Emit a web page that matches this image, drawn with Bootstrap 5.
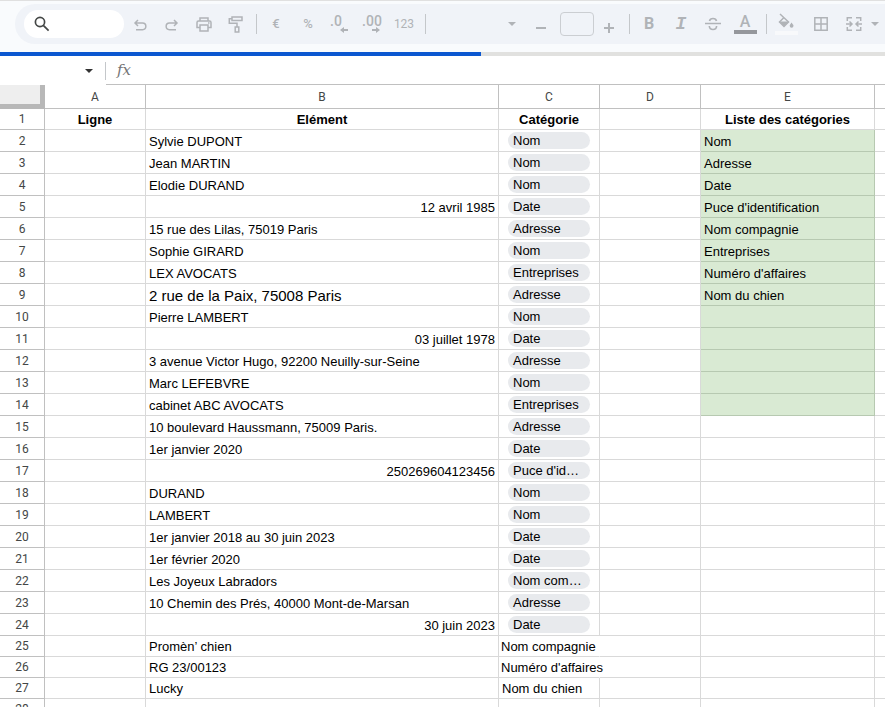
<!DOCTYPE html>
<html lang="fr">
<head>
<meta charset="utf-8">
<meta name="viewport" content="width=device-width, initial-scale=1">
<title>Feuille de calcul</title>
<link href="https://cdn.jsdelivr.net/npm/bootstrap@5.3.0/dist/css/bootstrap.min.css" rel="stylesheet">
<style>
body{font-family:"Liberation Sans",Arial,sans-serif;font-size:13px;color:#000;background:#fff}
.app-top{background:#f9fbfd;border-top:1px solid #e0e0e0;padding:3px 0 8px 15px}
.tools{background:#f0f3f8;height:40px;border-radius:20px 0 0 20px;padding-left:9px;color:#b0b3b7}
.tools>*{flex:none}
.search-pill{width:100px;height:28px;background:#fff;border-radius:14px;padding-left:10px}
.search-pill input{width:60px;background:transparent;outline:0}
.tool{width:32px;height:32px;padding:0;border:0;background:transparent;color:#b0b3b7;font:500 13px/16px Roboto,sans-serif;display:flex;align-items:center;justify-content:center}
.tool svg,.search-pill svg{display:block}
.tool-sm{width:24px}
.tool-xs{width:8px}
.tool-wide{width:92px;justify-content:flex-end;padding-right:5px}
.rule{width:1px;height:20px;background:#c4c7ca;margin:0 3px}
.rule-first{margin-left:4px}
.rule-gap{margin-left:5px}
.size-box{width:34px;height:24px;border:1px solid #cbced2;border-radius:4px;background:transparent;padding:0;margin:0 3px 0 7px}
.glyph-lg{font-size:16px;font-weight:700}
.glyph-sm{font-size:12px;font-weight:400}
.glyph-i{font:italic 700 18px/18px "Liberation Mono",monospace}
.digits{font-size:14px;line-height:12px}
.cells-group{gap:1px;margin-left:3px}
.load-bar{height:4px;border-radius:0;background:#e1e1df}
.load-bar .progress-bar{background:#0b57d0}
.formula{height:29px}
.name-box{width:105px;padding-right:12px}
.formula .rule{height:18px;margin:0}
.formula-field{border-bottom:1px solid #c0c0c0}
.fx{font:italic 400 15px/18px "DejaVu Serif",serif;color:#757575;padding-left:11px}
.formula input{outline:0}
.sheet-wrap{min-height:0}
.sheet{width:100%;table-layout:fixed;border-collapse:separate;border-spacing:0}
.sheet th,.sheet td{height:22px;padding:0 3px;border-right:1px solid #d9d9d9;border-bottom:1px solid #d9d9d9;line-height:18px;white-space:nowrap;vertical-align:bottom;overflow:hidden}
.sheet tr>:last-child{border-right:0}
.sheet .low>*{height:21px}
.sheet thead th{height:24px;border-color:#c0c0c0;line-height:22px;vertical-align:middle}
.sheet thead th,.sheet tbody th{font-family:Roboto,sans-serif;font-weight:400;font-size:12px;color:#444746;text-align:center}
.sheet tbody th{border-color:#c0c0c0;line-height:20px}
.sheet thead th.corner{background:#eee;border-right:5px solid #b8b8b8;border-bottom:5px solid #b8b8b8}
.c-num{width:45px}.c-std{width:101px}.c-el{width:353px}.c-list{width:174px}
.sheet td.spill{overflow:visible;border-right-color:transparent;padding-left:2px}
.sheet td.green{background:#d9ead3;border-color:#b7c9b1}
.sheet td.big{font-size:15px}
.sheet td.chip-cell{padding:2px 9px 0;vertical-align:top}
.chip{background:#e8eaed;border-radius:9px;height:17px;line-height:17px;padding:0 5px}
</style>
<script src="https://cdn.jsdelivr.net/npm/bootstrap@5.3.0/dist/js/bootstrap.bundle.min.js"></script>
</head>
<body class="vh-100 overflow-hidden d-flex flex-column">
<header class="app-top flex-shrink-0">
<div class="tools d-flex align-items-center overflow-hidden" role="toolbar" aria-label="Mise en forme">
<label class="search-pill d-flex align-items-center gap-2">
<svg width="16" height="16" viewBox="0 0 16 16" fill="none" stroke="#444746" stroke-width="1.7"><circle cx="6" cy="6" r="4.6"/><path d="M9.3 9.3 14.6 14.6"/></svg>
<input class="border-0 p-0" type="text" aria-label="Rechercher">
</label>
<button class="tool" aria-label="Annuler"><svg width="14" height="16" viewBox="0 0 14 16" fill="none" stroke="currentColor" stroke-width="1.5"><path d="M5 4 2 7l3 3M2 7h7.500a3.300 3.300 0 0 1 0 6.700H3"/></svg></button>
<button class="tool" aria-label="Rétablir"><svg width="14" height="16" viewBox="0 0 14 16" fill="none" stroke="currentColor" stroke-width="1.5"><path d="M9 4l3 3-3 3M12 7H4.500a3.300 3.300 0 0 0 0 6.700H11"/></svg></button>
<button class="tool" aria-label="Imprimer"><svg width="16" height="16" viewBox="0 0 16 16" fill="none" stroke="currentColor" stroke-width="1.500"><path d="M4 5V2h8v3M4 11.500H1V6.500Q1 5 2.500 5h11Q15 5 15 6.500v5h-3M4 9h8v6H4z"/><path d="M12 7h1.500"/></svg></button>
<button class="tool" aria-label="Copier la mise en forme"><svg width="16" height="18" viewBox="0 0 16 18" fill="none" stroke="currentColor" stroke-width="1.500"><path d="M4 2h10v3.500H4zM4 3.700H1.300V8.300H9V12M7.200 12h3.600v5H7.200z"/></svg></button>
<span class="rule rule-first"></span>
<button class="tool" aria-label="Format monétaire">€</button>
<button class="tool" aria-label="Format pourcentage">%</button>
<button class="tool flex-column" aria-label="Réduire les décimales"><span class="digits me-2">.0</span><svg width="8" height="6" viewBox="0 0 8 6" class="ms-2"><path d="M8 2H4V0L0 3l4 3V4h4z" fill="currentColor"/></svg></button>
<button class="tool flex-column" aria-label="Ajouter des décimales"><span class="digits">.00</span><svg width="8" height="6" viewBox="0 0 8 6" class="ms-2"><path d="M0 2h4V0l4 3-4 3V4H0z" fill="currentColor"/></svg></button>
<button class="tool glyph-sm" aria-label="Autres formats">123</button>
<span class="rule rule-gap"></span>
<button class="tool tool-wide" aria-label="Police"><svg width="8" height="4" viewBox="0 0 8 4"><path d="M0 0h8L4 4z" fill="currentColor"/></svg></button>
<button class="tool tool-sm ms-2" aria-label="Réduire la taille"><svg width="10" height="10" viewBox="0 0 10 10" class="mt-2"><path d="M0 4h10v2H0z" fill="currentColor"/></svg></button>
<input class="size-box" type="text" aria-label="Taille de police">
<button class="tool tool-sm" aria-label="Augmenter la taille"><svg width="10" height="10" viewBox="0 0 10 10" class="mt-2"><path d="M4 0h2v4h4v2H6v4H4V6H0V4h4z" fill="currentColor"/></svg></button>
<span class="rule ms-2"></span>
<button class="tool glyph-lg" aria-label="Gras">B</button>
<button class="tool glyph-i" aria-label="Italique">I</button>
<button class="tool" aria-label="Barré"><svg width="16" height="14" viewBox="0 0 16 14" fill="none" stroke="currentColor" stroke-width="1.600"><path d="M0 6.500h16M11.500 4Q11 1.500 8 1.500T4.500 4M4.300 9Q4.500 12.500 8 12.500T11.600 9"/></svg></button>
<button class="tool flex-column" aria-label="Couleur du texte"><span class="glyph-lg fw-medium">A</span><svg width="23" height="4" viewBox="0 0 23 4"><path d="M0 0h23v4H0z" fill="#95979c"/></svg></button>
<span class="rule rule-gap"></span>
<button class="tool" aria-label="Couleur de remplissage"><svg width="23" height="22" viewBox="0 0 23 22"><path d="M0 18h23v4H0z" fill="#f8f9fb"/><path d="M5 1l8.500 8L9 13.500 4.500 9 9 4.500" fill="none" stroke="currentColor" stroke-width="1.500"/><path d="M4.200 8.500h9.600L9 13.500z" fill="currentColor"/><path d="M16.500 9.500q2 2.500 2 3.300a1.900 1.900 0 0 1-3.800 0q0-.8 1.800-3.300z" fill="currentColor"/></svg></button>
<div class="cells-group d-flex align-items-center">
<button class="tool" aria-label="Bordures"><svg width="14" height="14" viewBox="0 0 14 14" fill="none" stroke="currentColor" stroke-width="1.500"><path d="M.8.800h12.400v12.400H.8zM7 1v12M1 7h12"/></svg></button>
<button class="tool" aria-label="Fusionner les cellules"><svg width="16" height="14" viewBox="0 0 16 14" fill="none" stroke="currentColor" stroke-width="1.500"><path d="M6 .8H1.300V4M10 .8h4.700V4M6 13.200H1.300V10M10 13.200h4.700V10M0 7h6M16 7h-6M3.500 4.500 6 7 3.500 9.500M12.500 4.500 10 7l2.500 2.500"/></svg></button>
<button class="tool tool-xs" aria-label="Type de fusion"><svg width="8" height="4" viewBox="0 0 8 4"><path d="M0 0h8L4 4z" fill="currentColor"/></svg></button>
</div>
</div>
</header>
<div class="progress load-bar flex-shrink-0" role="progressbar" aria-label="Chargement" aria-valuenow="54" aria-valuemin="0" aria-valuemax="100"><div class="progress-bar" style="width:54.35%"></div></div>
<div class="formula d-flex align-items-center flex-shrink-0">
<button class="name-box border-0 bg-transparent d-flex justify-content-end" aria-label="Zone de nom"><svg width="8" height="4" viewBox="0 0 8 4"><path d="M0 0h8L4 4z" fill="#333"/></svg></button>
<span class="rule"></span>
<div class="formula-field d-flex align-items-center flex-grow-1 h-100">
<label class="fx" for="formula">fx</label>
<input id="formula" class="border-0 flex-grow-1 bg-transparent" type="text">
</div>
</div>
<main class="sheet-wrap flex-grow-1 overflow-hidden">
<table class="sheet">
<colgroup><col class="c-num"><col class="c-std"><col class="c-el"><col class="c-std"><col class="c-std"><col class="c-list"><col></colgroup>
<thead><tr><th class="corner"></th><th>A</th><th>B</th><th>C</th><th>D</th><th>E</th><th></th></tr></thead>
<tbody>
<tr class="low"><th>1</th><td class="text-center fw-bold">Ligne</td><td class="text-center fw-bold">Elément</td><td class="text-center fw-bold">Catégorie</td><td></td><td class="text-center fw-bold">Liste des catégories</td><td></td></tr>
<tr><th>2</th><td></td><td>Sylvie DUPONT</td><td class="chip-cell"><div class="chip text-truncate">Nom</div></td><td></td><td class="green">Nom</td><td></td></tr>
<tr><th>3</th><td></td><td>Jean MARTIN</td><td class="chip-cell"><div class="chip text-truncate">Nom</div></td><td></td><td class="green">Adresse</td><td></td></tr>
<tr><th>4</th><td></td><td>Elodie DURAND</td><td class="chip-cell"><div class="chip text-truncate">Nom</div></td><td></td><td class="green">Date</td><td></td></tr>
<tr><th>5</th><td></td><td class="text-end">12 avril 1985</td><td class="chip-cell"><div class="chip text-truncate">Date</div></td><td></td><td class="green">Puce d'identification</td><td></td></tr>
<tr><th>6</th><td></td><td>15 rue des Lilas, 75019 Paris</td><td class="chip-cell"><div class="chip text-truncate">Adresse</div></td><td></td><td class="green">Nom compagnie</td><td></td></tr>
<tr><th>7</th><td></td><td>Sophie GIRARD</td><td class="chip-cell"><div class="chip text-truncate">Nom</div></td><td></td><td class="green">Entreprises</td><td></td></tr>
<tr><th>8</th><td></td><td>LEX AVOCATS</td><td class="chip-cell"><div class="chip text-truncate">Entreprises</div></td><td></td><td class="green">Numéro d'affaires</td><td></td></tr>
<tr><th>9</th><td></td><td class="big">2 rue de la Paix, 75008 Paris</td><td class="chip-cell"><div class="chip text-truncate">Adresse</div></td><td></td><td class="green">Nom du chien</td><td></td></tr>
<tr><th>10</th><td></td><td>Pierre LAMBERT</td><td class="chip-cell"><div class="chip text-truncate">Nom</div></td><td></td><td class="green"></td><td></td></tr>
<tr><th>11</th><td></td><td class="text-end">03 juillet 1978</td><td class="chip-cell"><div class="chip text-truncate">Date</div></td><td></td><td class="green"></td><td></td></tr>
<tr><th>12</th><td></td><td>3 avenue Victor Hugo, 92200 Neuilly-sur-Seine</td><td class="chip-cell"><div class="chip text-truncate">Adresse</div></td><td></td><td class="green"></td><td></td></tr>
<tr><th>13</th><td></td><td>Marc LEFEBVRE</td><td class="chip-cell"><div class="chip text-truncate">Nom</div></td><td></td><td class="green"></td><td></td></tr>
<tr><th>14</th><td></td><td>cabinet ABC AVOCATS</td><td class="chip-cell"><div class="chip text-truncate">Entreprises</div></td><td></td><td class="green"></td><td></td></tr>
<tr><th>15</th><td></td><td>10 boulevard Haussmann, 75009 Paris.</td><td class="chip-cell"><div class="chip text-truncate">Adresse</div></td><td></td><td></td><td></td></tr>
<tr><th>16</th><td></td><td>1er janvier 2020</td><td class="chip-cell"><div class="chip text-truncate">Date</div></td><td></td><td></td><td></td></tr>
<tr><th>17</th><td></td><td class="text-end">250269604123456</td><td class="chip-cell"><div class="chip text-truncate">Puce d'identification</div></td><td></td><td></td><td></td></tr>
<tr><th>18</th><td></td><td>DURAND</td><td class="chip-cell"><div class="chip text-truncate">Nom</div></td><td></td><td></td><td></td></tr>
<tr><th>19</th><td></td><td>LAMBERT</td><td class="chip-cell"><div class="chip text-truncate">Nom</div></td><td></td><td></td><td></td></tr>
<tr><th>20</th><td></td><td>1er janvier 2018 au 30 juin 2023</td><td class="chip-cell"><div class="chip text-truncate">Date</div></td><td></td><td></td><td></td></tr>
<tr><th>21</th><td></td><td>1er février 2020</td><td class="chip-cell"><div class="chip text-truncate">Date</div></td><td></td><td></td><td></td></tr>
<tr><th>22</th><td></td><td>Les Joyeux Labradors</td><td class="chip-cell"><div class="chip text-truncate">Nom compagnie</div></td><td></td><td></td><td></td></tr>
<tr><th>23</th><td></td><td>10 Chemin des Prés, 40000 Mont-de-Marsan</td><td class="chip-cell"><div class="chip text-truncate">Adresse</div></td><td></td><td></td><td></td></tr>
<tr><th>24</th><td></td><td class="text-end">30 juin 2023</td><td class="chip-cell"><div class="chip text-truncate">Date</div></td><td></td><td></td><td></td></tr>
<tr class="low"><th>25</th><td></td><td>Promèn’ chien</td><td class="spill">Nom compagnie</td><td></td><td></td><td></td></tr>
<tr class="low"><th>26</th><td></td><td>RG 23/00123</td><td class="spill">Numéro d'affaires</td><td></td><td></td><td></td></tr>
<tr class="low"><th>27</th><td></td><td>Lucky</td><td>Nom du chien</td><td></td><td></td><td></td></tr>
<tr class="low"><th>28</th><td></td><td></td><td></td><td></td><td></td><td></td></tr>
</tbody>
</table>
</main>
</body>
</html>
